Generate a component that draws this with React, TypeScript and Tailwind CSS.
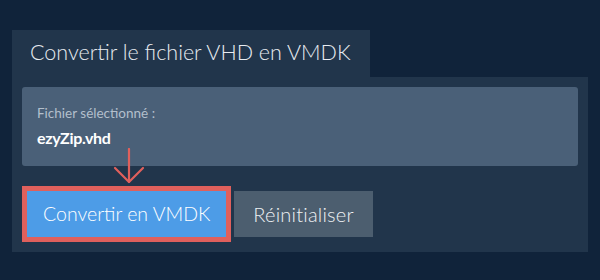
import React from "react";

function DownArrow() {
  return (
    <svg
      width="32"
      height="36"
      viewBox="0 0 32 36"
      className="absolute left-[86px] top-[-43px]"
      fill="none"
      stroke="#e0605c"
      strokeWidth="2.2"
      strokeLinecap="round"
      strokeLinejoin="round"
    >
      <path d="M16 1 V34" />
      <path d="M2 20 L16 34 L30 20" />
    </svg>
  );
}

export default function App() {
  return (
    <div className="w-[600px] h-[280px] bg-[#10233a] pt-[30px] px-[12px] font-['Lato',sans-serif]">
      <div className="w-[358px] h-[47px] bg-[#21354b] flex items-center pl-[18px] pb-[2px]">
        <h1 className="text-[21.5px] font-light text-[#e8ecf1]">
          Convertir le fichier VHD en VMDK
        </h1>
      </div>
      <div className="bg-[#21354b] px-[10px] pt-[10px] pb-[15px]">
        <div className="bg-[#4a6078] rounded-[3px] h-[79px] px-[15px] pt-[17px]">
          <p className="text-[13.5px] text-[#b3bfcc] leading-[18px]">
            Fichier sélectionné :
          </p>
          <p className="text-[16px] font-bold text-white leading-[20px] mt-[6px] tracking-[-0.3px]">
            ezyZip.vhd
          </p>
        </div>
        <div className="relative flex gap-[8px] mt-[25px] ml-[5px]">
          <DownArrow />
          <button className="h-[46px] px-[16px] bg-[#4d9ce7] text-white text-[19.5px] font-light outline-[5px] outline-solid outline-[#e0605c]">
            Convertir en VMDK
          </button>
          <button className="h-[46px] px-[19px] bg-[#4c5e6f] text-[#eef1f4] text-[20px] font-light tracking-[0.2px]">
            Réinitialiser
          </button>
        </div>
      </div>
    </div>
  );
}
